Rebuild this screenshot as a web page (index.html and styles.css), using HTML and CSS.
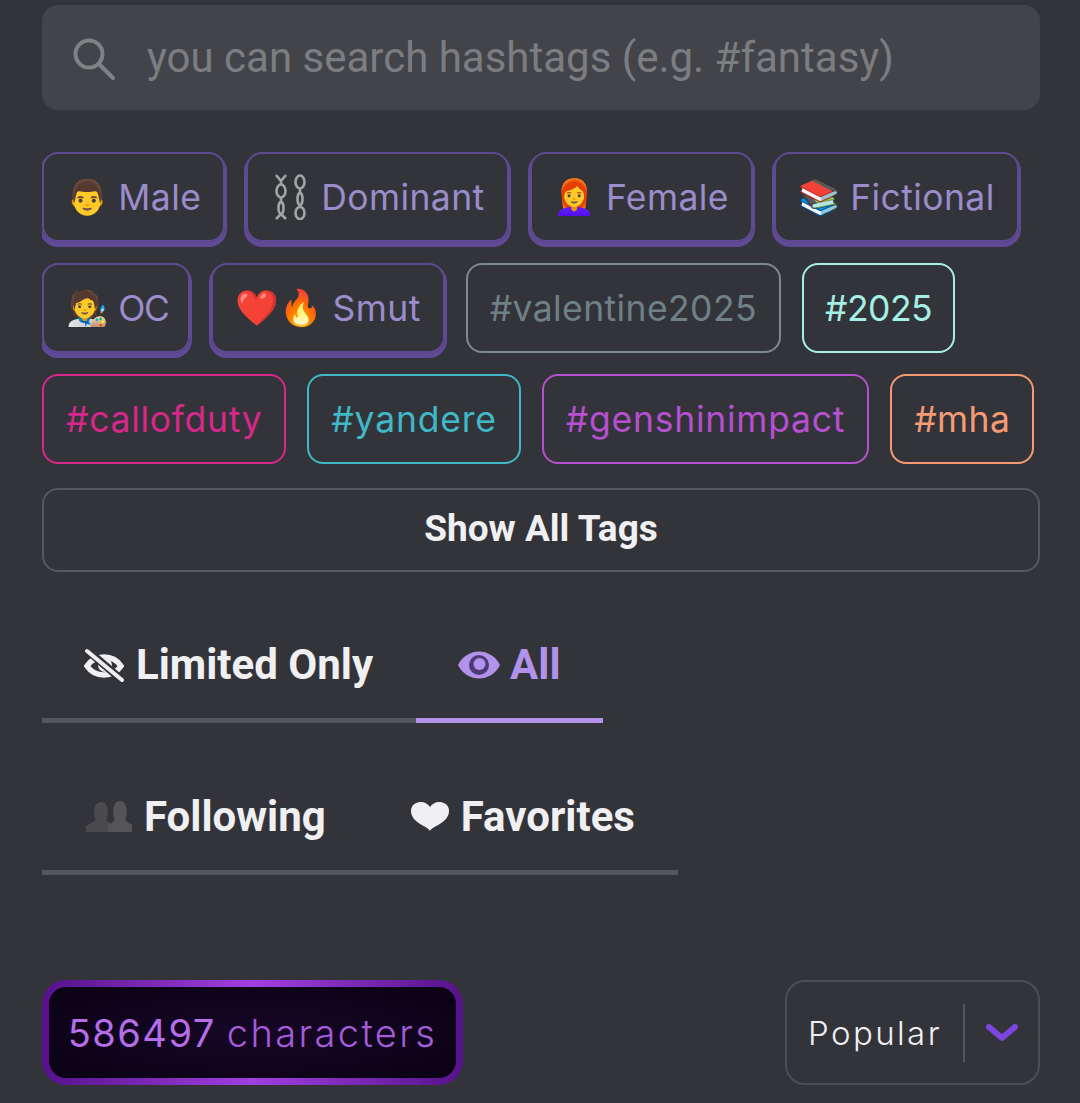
FILE: index.html
```html
<!DOCTYPE html>
<html lang="en">
<head>
<meta charset="utf-8">
<title>Search</title>
<link rel="stylesheet" href="styles.css">
</head>
<body>
<main class="page">
  <div class="search">
    <svg class="search-icon" viewBox="0 0 42 42" width="42" height="42"><circle cx="16" cy="16" r="13.5" fill="none" stroke="#808185" stroke-width="4"/><path d="M26 26 L40 40" stroke="#808185" stroke-width="4" stroke-linecap="round"/></svg>
    <span class="placeholder">you can search hashtags (e.g. #fantasy)</span>
  </div>
  <div class="tags">
    <span class="tag tag-cat"><span class="emoji">👨</span>Male</span>
    <span class="tag tag-cat">
      <svg class="chains" viewBox="0 0 34 46" width="34" height="46"><g fill="none" stroke="#a3a5a5" stroke-width="2.6"><path d="M2 1 L7 7 L12 1 M7 7 V11"/><ellipse cx="7" cy="17" rx="4.5" ry="6.5"/><path d="M7 23 V28"/><ellipse cx="7" cy="34" rx="2.5" ry="6"/><path d="M7 40 L2 45 M7 40 L12 45"/><ellipse cx="26" cy="8" rx="4.5" ry="6.5"/><path d="M26 14 V19"/><ellipse cx="26" cy="25" rx="2.5" ry="6"/><path d="M26 31 V33"/><ellipse cx="26" cy="39" rx="4.5" ry="6"/></g></svg>
      Dominant
    </span>
    <span class="tag tag-cat"><span class="emoji">👩‍🦰</span>Female</span>
    <span class="tag tag-cat"><span class="emoji">📚</span>Fictional</span>
    <span class="tag tag-cat tag-short"><span class="emoji">🧑‍🎨</span>OC</span>
    <span class="tag tag-cat"><span class="emoji emoji-large">❤️🔥</span>Smut</span>
    <span class="tag tag-gray">#valentine2025</span>
    <span class="tag tag-mint">#2025</span>
    <span class="tag tag-pink">#callofduty</span>
    <span class="tag tag-teal">#yandere</span>
    <span class="tag tag-violet">#genshinimpact</span>
    <span class="tag tag-orange">#mha</span>
  </div>
  <button class="show-all">Show All Tags</button>
  <div class="tabs tabs-first">
    <div class="tab">
      <svg viewBox="0 0 40 34" width="40" height="34"><path d="M3 18 C11 6 29 6 37 18 C29 30 11 30 3 18Z" fill="none" stroke="#f0f0f3" stroke-width="5.5"/><circle cx="21" cy="17" r="7" fill="#f0f0f3"/><path d="M3 2 L38 32" stroke="#33343a" stroke-width="8"/><path d="M3 3 L38 32" stroke="#f0f0f3" stroke-width="4" stroke-linecap="round"/></svg>
      Limited Only
    </div>
    <div class="tab tab-active">
      <svg viewBox="0 0 42 28" width="42" height="28"><path d="M0 14 C9 -4 33 -4 42 14 C33 32 9 32 0 14Z" fill="#b292ea"/><circle cx="21" cy="14" r="10" fill="#4a3a78"/><circle cx="21.5" cy="13" r="6" fill="#b292ea"/></svg>
      All
    </div>
  </div>
  <div class="tabs tabs-second">
    <div class="tab tab-wide">
      <svg viewBox="0 0 46 32" width="46" height="32"><path d="M0 31 V25 L10 19 C7 14 7 1 15 1 C23 1 23 14 20 19 L26 23 V31Z" fill="#4b4b4d"/><path d="M22 31 V25 L29 19 C26 14 26 0 34 0 C42 0 42 14 39 19 L46 24 V31Z" fill="#555557"/></svg>
      Following
    </div>
    <div class="tab">
      <svg viewBox="0 0 38 29" width="38" height="29"><path d="M19 29 C17 24 0 21 0 9 C0 2 6 0 10 0 C14 0 17 2 19 5 C21 2 24 0 28 0 C32 0 38 2 38 9 C38 21 21 24 19 29Z" fill="#f0f0f3"/></svg>
      Favorites
    </div>
  </div>
  <div class="footer-row">
    <div class="count"><span class="count-num">586497</span><span class="count-label">characters</span></div>
    <div class="select">
      <span class="select-label">Popular</span>
      <span class="select-sep"></span>
      <svg viewBox="0 0 32 20" width="32" height="20"><path d="M3 4 L16 15 L29 4" fill="none" stroke="#7c45df" stroke-width="6" stroke-linecap="round" stroke-linejoin="round"/></svg>
    </div>
  </div>
</main>
</body>
</html>
```
FILE: styles.css
```css
* { box-sizing: border-box; }
html, body { margin: 0; padding: 0; }
body { background: #33343a; width: 1080px; height: 1103px; overflow: hidden; font-family: Roboto, "Liberation Sans", sans-serif; }
.page { padding: 5px 40px 0 42px; display: flex; flex-direction: column; }
.search { height: 105px; background: #434449; border-radius: 16px; display: flex; align-items: center; padding-left: 31px; gap: 32px; }
.search-icon { flex: none; margin-top: 2px; }
.placeholder { font-size: 42px; color: #7c7d81; }
.tags { display: flex; flex-wrap: wrap; gap: 21px; margin-top: 40px; width: 1010px; overflow: hidden; padding: 2px 4px 0 0; }
.tag { height: 90px; padding: 0 22px; display: inline-flex; align-items: center; gap: 10px; border: 2px solid; border-radius: 16px; font-family: Inter, "Noto Sans", sans-serif; font-size: 35.5px; letter-spacing: 0.4px; white-space: nowrap; }
.emoji { font-family: "Noto Color Emoji", sans-serif; font-size: 34px; letter-spacing: 0; }
.emoji-large { font-size: 35px; }
.chains { flex: none; margin-left: 4px; margin-right: 3px; }
.tag-cat { color: #9b8ccb; border-color: #5f4a96; box-shadow: 0 3px 0 2px #5f4a96; }
.tag-short { letter-spacing: -1.5px; padding-right: 20px; }
.tag-gray { color: #6f8087; border-color: #7d8a8e; }
.tag-mint { color: #a5f0e4; border-color: #a5f0e4; letter-spacing: -0.5px; padding: 0 21px; }
.tag-pink { color: #d8278b; border-color: #d8278b; letter-spacing: 0.7px; }
.tag-teal { color: #3fb8c8; border-color: #3fb8c8; letter-spacing: 0.8px; }
.tag-violet { color: #b64fd0; border-color: #b64fd0; letter-spacing: 0.75px; }
.tag-orange { color: #f59a73; border-color: #f59a73; }
.show-all { margin-top: 24px; height: 84px; padding-bottom: 4px; background: none; border: 2px solid #57585d; border-radius: 16px; color: #f0f0f3; font: 700 37px Roboto, sans-serif; }
.tabs { display: flex; width: fit-content; }
.tabs-first { margin-top: 61px; }
.tabs-second { margin-top: 62px; }
.tab { display: flex; align-items: center; gap: 12px; height: 90px; padding: 0 43px 22px 42px; color: #f0f0f3; font-weight: 700; font-size: 42px; border-bottom: 5px solid #55565b; }
.tab-active { color: #b292ea; border-bottom-color: #b292ea; gap: 10px; padding-right: 42px; }
.tab-wide { padding-left: 44px; }
.footer-row { display: flex; justify-content: space-between; align-items: stretch; margin-top: 105px; }
.count { height: 105px; width: 421px; border: 7px solid transparent; border-radius: 24px; background: radial-gradient(ellipse at center, #170726, #0a0214) padding-box, linear-gradient(90deg, #55128a, #a13fe0 50%, #55128a) border-box; font-family: Inter, sans-serif; font-size: 38px; display: flex; align-items: center; justify-content: center; gap: 11px; }
.count-num { font-weight: 400; letter-spacing: 1.5px; color: #b56ee8; }
.count-label { font-weight: 300; letter-spacing: 2.4px; color: #a55cd8; }
.select { height: 105px; width: 255px; border: 2px solid #4d4e53; border-radius: 20px; display: flex; align-items: center; padding-left: 21px; color: #f0f0f3; }
.select-label { font-family: Inter, sans-serif; font-weight: 300; font-size: 33px; letter-spacing: 2.4px; }
.select-sep { width: 2px; height: 58px; background: #55565b; margin: 0 21px 0 21px; }
```
